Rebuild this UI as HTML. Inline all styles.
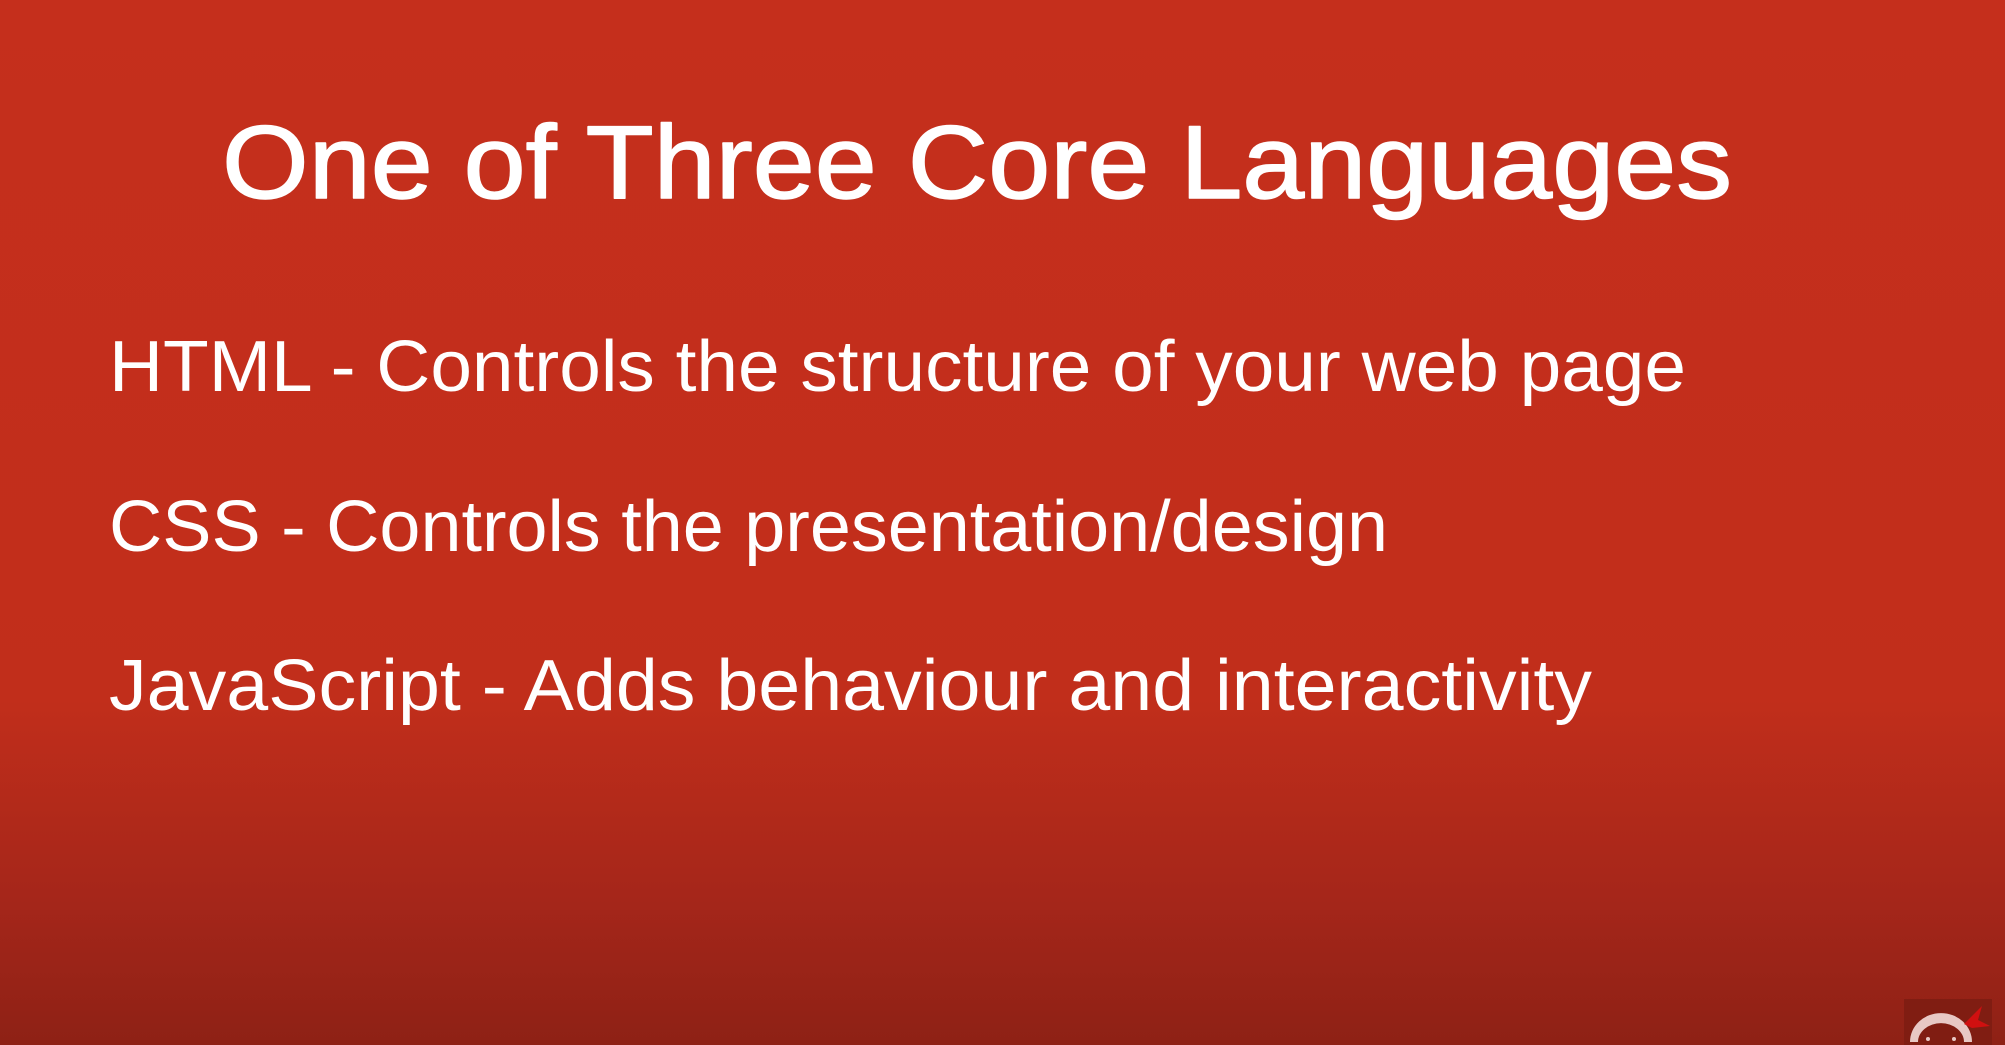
<!DOCTYPE html>
<html><head><meta charset="utf-8"><style>
html,body{margin:0;padding:0;width:2005px;height:1045px;overflow:hidden}
body{background:linear-gradient(to bottom,#c52f1c 0px,#c12e1b 700px,#a5261a 900px,#8e2115 1045px)}
svg{position:absolute;left:0;top:0}
text{font-family:"Liberation Sans",sans-serif;fill:#fff}
</style></head><body>
<svg width="2005" height="1045" viewBox="0 0 2005 1045">
<text x="222" y="198" font-size="104" stroke="#fff" stroke-width="1.5" stroke-linejoin="round" textLength="1510" lengthAdjust="spacingAndGlyphs">One of Three Core Languages</text>
<text x="109" y="391" font-size="72" textLength="1577" lengthAdjust="spacingAndGlyphs">HTML - Controls the structure of your web page</text>
<text x="109" y="551" font-size="72" textLength="1279" lengthAdjust="spacingAndGlyphs">CSS - Controls the presentation/design</text>
<text x="109" y="710" font-size="72" textLength="1483" lengthAdjust="spacingAndGlyphs">JavaScript - Adds behaviour and interactivity</text>
<rect x="1904" y="999" width="88" height="46" fill="#801d12"/>
<path d="M1910 1042 A30 28 0 0 1 1972 1042 L1964 1042 A22 18 0 0 0 1918 1042 Z" fill="#e8c8c4"/>
<circle cx="1928" cy="1039" r="2" fill="#e8c8c4"/>
<circle cx="1954" cy="1039" r="2" fill="#e8c8c4"/>
<path d="M1964 1024 L1982 1006 L1978 1020 L1990 1026 L1972 1028 Z" fill="#d01010"/>
</svg>
</body></html>
